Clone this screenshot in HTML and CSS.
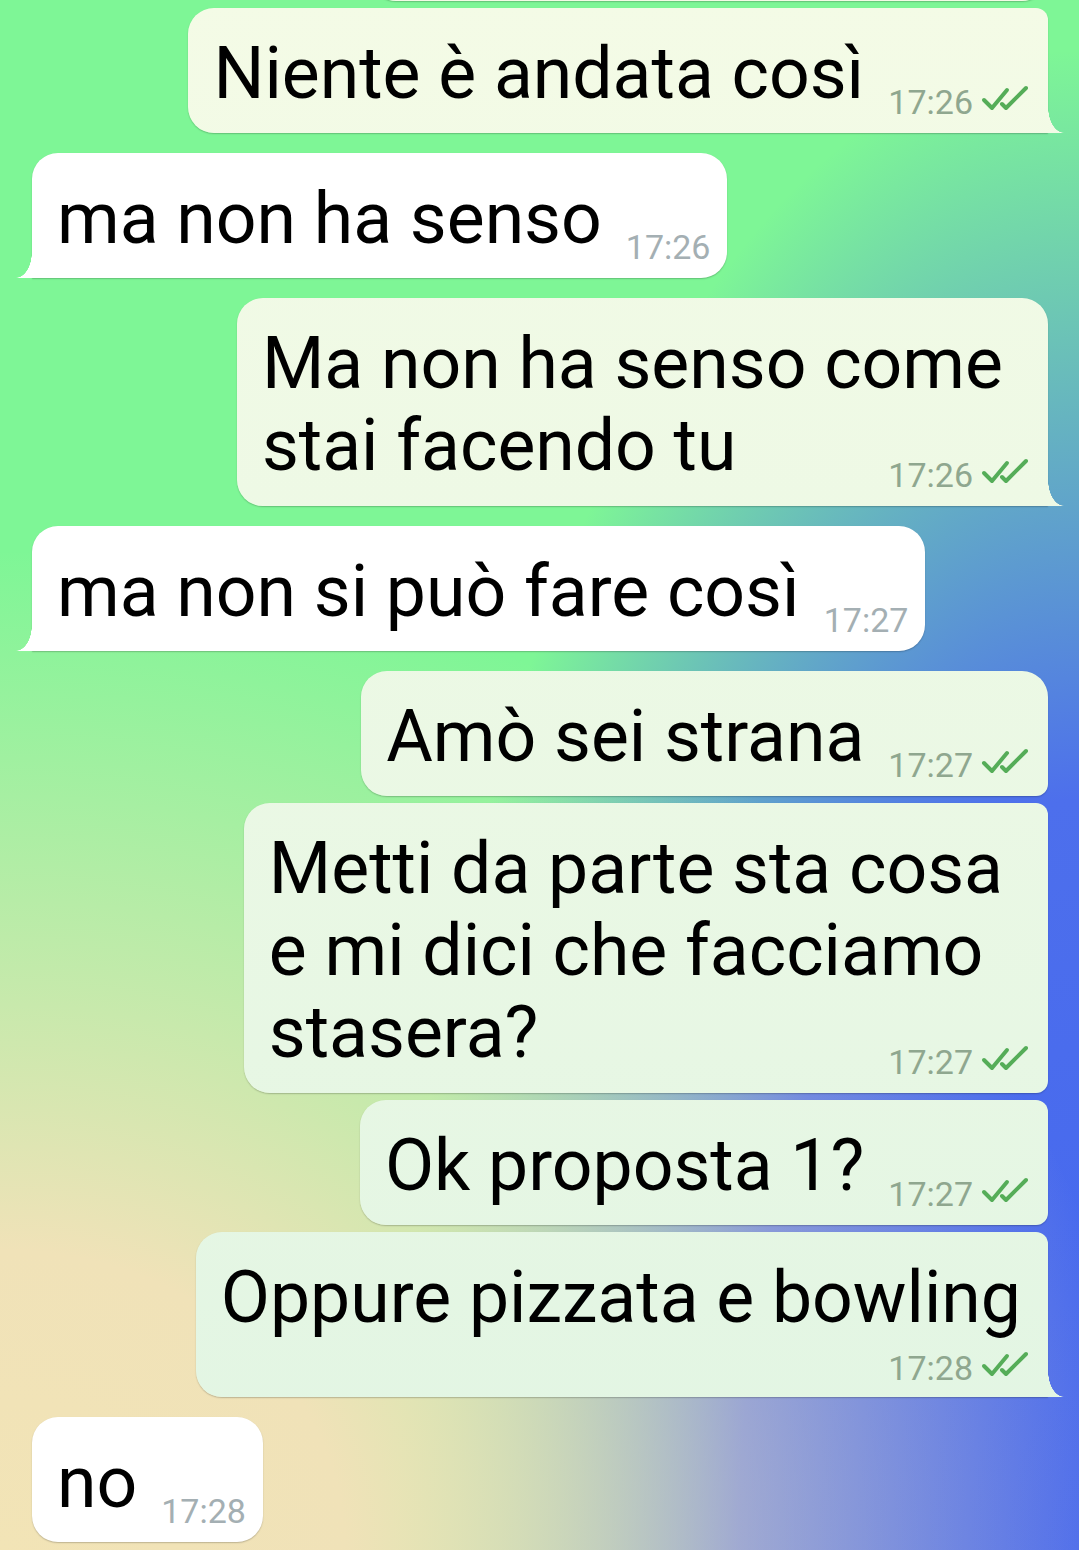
FILE: index.html
```html
<!DOCTYPE html>
<html lang="it">
<head>
    <meta charset="UTF-8">
    <meta name="viewport" content="width=device-width, initial-scale=1.0">
    <title>Chat</title>
    <link rel="stylesheet" href="styles.css">
</head>
<body>
    <div class="chat">
        <div class="bubble out stub"></div>

        <div class="bubble out cont-top tail">
            <span class="text">Niente è andata così</span><span class="meta"><span class="time">17:26</span><svg class="check" viewBox="0 0 48 28"><path d="M4 16 L12 24 L27 6"/><path d="M22 20 L26 24 L46 4"/></svg></span>
        </div>

        <div class="bubble in tail new-group">
            <span class="text">ma non ha senso</span><span class="meta"><span class="time">17:26</span></span>
        </div>

        <div class="bubble out tail multi new-group">
            <span class="text">Ma non ha senso come<br>stai facendo tu</span><span class="meta"><span class="time">17:26</span><svg class="check" viewBox="0 0 48 28"><path d="M4 16 L12 24 L27 6"/><path d="M22 20 L26 24 L46 4"/></svg></span>
        </div>

        <div class="bubble in tail new-group">
            <span class="text">ma non si può fare così</span><span class="meta"><span class="time">17:27</span></span>
        </div>

        <div class="bubble out cont-bottom new-group">
            <span class="text">Amò sei strana</span><span class="meta"><span class="time">17:27</span><svg class="check" viewBox="0 0 48 28"><path d="M4 16 L12 24 L27 6"/><path d="M22 20 L26 24 L46 4"/></svg></span>
        </div>

        <div class="bubble out cont-top cont-bottom multi">
            <span class="text">Metti da parte sta cosa<br>e mi dici che facciamo<br>stasera?</span><span class="meta"><span class="time">17:27</span><svg class="check" viewBox="0 0 48 28"><path d="M4 16 L12 24 L27 6"/><path d="M22 20 L26 24 L46 4"/></svg></span>
        </div>

        <div class="bubble out cont-top cont-bottom">
            <span class="text">Ok proposta 1?</span><span class="meta"><span class="time">17:27</span><svg class="check" viewBox="0 0 48 28"><path d="M4 16 L12 24 L27 6"/><path d="M22 20 L26 24 L46 4"/></svg></span>
        </div>

        <div class="bubble out cont-top tail wide">
            <span class="text">Oppure pizzata e bowling</span><span class="meta"><span class="time">17:28</span><svg class="check" viewBox="0 0 48 28"><path d="M4 16 L12 24 L27 6"/><path d="M22 20 L26 24 L46 4"/></svg></span>
        </div>

        <div class="bubble in new-group">
            <span class="text">no</span><span class="meta"><span class="time">17:28</span></span>
        </div>
    </div>
</body>
</html>
```

FILE: styles.css
```css
* {
    margin: 0;
    padding: 0;
    box-sizing: border-box;
}

body {
    font-family: Roboto, 'Noto Sans', sans-serif;
    height: 1550px;
    overflow: hidden;
    color: #000;
    background:
        radial-gradient(ellipse 1150px 1000px at 0% 100%, #f2e4b6 0%, #f0e2b8 30%, rgba(240, 226, 184, 0) 100%),
        radial-gradient(ellipse 680px 1500px at 100% 100%, #4466ef 0%, #4d6fec 50%, rgba(77, 111, 236, 0) 100%),
        #7ef696;
}

.chat {
    display: flex;
    flex-direction: column;
    gap: 7px;
    padding: 0 31px 0 32px;
}

.new-group {
    margin-top: 13px;
}

.bubble {
    position: relative;
    padding: 25px 20px 15px 25px;
    border-radius: 26px;
    font-size: 71.5px;
    line-height: 82px;
    white-space: nowrap;
    box-shadow: 0 1px 1.5px rgba(0, 0, 0, 0.22);
}

.bubble.out {
    align-self: flex-end;
    background: linear-gradient(180deg, #f4fbe6 0%, #e1f5e3 100%) fixed;
}

.bubble.in {
    align-self: flex-start;
    background: #fff;
    padding-right: 17px;
}

.bubble.stub {
    width: 678px;
    height: 120px;
    margin-top: -119px;
}

.out.cont-top { border-top-right-radius: 12px; }
.out.cont-bottom { border-bottom-right-radius: 12px; }

.out.tail { border-bottom-right-radius: 0; }
.in.tail { border-bottom-left-radius: 0; }

.bubble.tail::after {
    content: "";
    position: absolute;
    bottom: 0;
    width: 16px;
    height: 26px;
    background: inherit;
}

.out.tail::after {
    right: -16px;
    -webkit-mask-image: radial-gradient(ellipse 16px 26px at 100% 0, transparent 98%, #000 100%);
    mask-image: radial-gradient(ellipse 16px 26px at 100% 0, transparent 98%, #000 100%);
}

.in.tail::after {
    left: -16px;
    -webkit-mask-image: radial-gradient(ellipse 16px 26px at 0 0, transparent 98%, #000 100%);
    mask-image: radial-gradient(ellipse 16px 26px at 0 0, transparent 98%, #000 100%);
}

/* time sits on the text line, a bit lower than the baseline */
.meta {
    display: inline-flex;
    align-items: flex-start;
    margin-left: 24px;
    vertical-align: -16px;
    font-size: 34px;
    line-height: 32px;
}

/* on wrapped text the time goes to the right end of the last line */
.multi {
    padding-right: 45px;
}

.multi .meta {
    float: right;
    display: flex;
    margin: 54px -25px 0 24px;
}

/* text fills the bubble, time drops to its own row */
.wide {
    padding-right: 27px;
    padding-bottom: 13px;
}

.wide .text {
    display: block;
}

.wide .meta {
    display: flex;
    justify-content: flex-end;
    margin: 13px -7px 0 0;
}

.out .time {
    color: #8fa78f;
}

.in .time {
    color: #a4afb3;
}

.check {
    width: 48px;
    height: 28px;
    margin: -2px 0 0 7px;
    fill: none;
    stroke: #55ad58;
    stroke-width: 4;
    stroke-linecap: round;
    stroke-linejoin: round;
}
```
